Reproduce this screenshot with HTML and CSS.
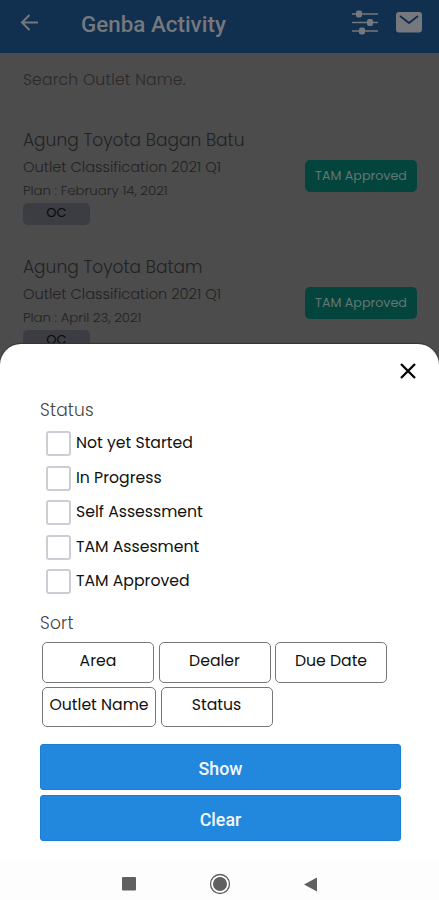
FILE: index.html
```html
<!DOCTYPE html>
<html lang="en">
<head>
<meta charset="utf-8">
<meta name="viewport" content="width=device-width, initial-scale=1">
<title>Genba Activity</title>
<link rel="stylesheet" href="styles.css">
</head>
<body>
<div class="screen">
  <header class="appbar">
    <svg class="back" width="20" height="20" viewBox="0 0 20 20"><path d="M18 9.500H2M9.500 2L2 9.500l7.500 7.500"/></svg>
    <h1>Genba Activity</h1>
    <svg class="sliders" width="28" height="26" viewBox="0 0 28 26"><path d="M1 4h26M1 12.500h26M1 21h26"/><rect x="5" y=".5" width="6" height="7" rx="2"/><rect x="16" y="9" width="6" height="7" rx="2"/><rect x="8" y="17.500" width="6" height="7" rx="2"/></svg>
    <svg class="mail" width="26" height="21" viewBox="0 0 26 21"><rect width="26" height="20.500" rx="3"/><path d="M4 4l9 7 9-7"/></svg>
  </header>
  <div class="search">Search Outlet Name.</div>
  <main class="list">
    <article class="item">
      <div class="info">
        <h2>Agung Toyota Bagan Batu</h2>
        <p class="sub">Outlet Classification 2021 Q1</p>
        <p class="plan">Plan : February 14, 2021</p>
        <span class="chip">OC</span>
      </div>
      <span class="badge">TAM Approved</span>
    </article>
    <article class="item">
      <div class="info">
        <h2>Agung Toyota Batam</h2>
        <p class="sub">Outlet Classification 2021 Q1</p>
        <p class="plan">Plan : April 23, 2021</p>
        <span class="chip">OC</span>
      </div>
      <span class="badge">TAM Approved</span>
    </article>
  </main>
  <section class="sheet">
    <svg class="close" width="16" height="16" viewBox="0 0 16 16"><path d="M1 1l14 14M15 1L1 15"/></svg>
    <h3>Status</h3>
    <div class="checks">
      <div class="check"><i></i><span>Not yet Started</span></div>
      <div class="check"><i></i><span>In Progress</span></div>
      <div class="check"><i></i><span>Self Assessment</span></div>
      <div class="check"><i></i><span>TAM Assesment</span></div>
      <div class="check"><i></i><span>TAM Approved</span></div>
    </div>
    <h3 class="sort">Sort</h3>
    <div class="options">
      <button>Area</button><button>Dealer</button><button>Due Date</button>
      <button class="wide">Outlet Name</button><button>Status</button>
    </div>
    <div class="actions">
      <button>Show</button>
      <button>Clear</button>
    </div>
  </section>
  <nav class="navbar">
    <svg width="14" height="14" viewBox="0 0 14 14"><rect width="14" height="13.500" rx="1"/></svg>
    <svg width="22" height="22" viewBox="0 0 22 22"><circle class="ring" cx="11" cy="11" r="9.500"/><circle cx="11" cy="11" r="7"/></svg>
    <svg width="14" height="15" viewBox="0 0 14 15"><path d="M0 7.500L13 .5v14z"/></svg>
  </nav>
</div>
</body>
</html>
```

FILE: styles.css
```css
* { box-sizing: border-box; }
body {
  margin: 0;
  font-family: Poppins, Inter, sans-serif;
  background: #4c4c4c;
}
h1, h2, h3, p { margin: 0; font-weight: 400; white-space: nowrap; }
button { font: inherit; padding: 0; white-space: nowrap; }
.screen { width: 439px; height: 900px; display: flex; flex-direction: column; overflow: hidden; }

.appbar {
  height: 53px; flex: none; display: flex; align-items: center;
  padding: 0 17px 8px 20px; background: #112f4e; color: #75797e;
}
.appbar h1 { margin: 2px 0 0 41px; font: 500 22.400px/28px Roboto, sans-serif; flex: 1; }
.back { fill: none; stroke: #75797e; stroke-width: 2; }
.sliders { margin-right: 17px; fill: #75797e; stroke: #75797e; stroke-width: 1.6; }
.sliders rect { stroke: none; }
.mail rect { fill: #75797e; }
.mail path { fill: none; stroke: #112f4e; stroke-width: 2; }

.search { height: 74px; flex: none; padding: 15px 23px; font-size: 15.500px; line-height: 23px; color: #2a2a2a; font-weight: 300; letter-spacing: .25px; }
.list { height: 217px; flex: none; overflow: hidden; color: #222; }
.item { height: 127px; display: flex; justify-content: space-between; padding: 0 22px 0 23px; }
.item h2 { font-size: 17px; line-height: 26px; font-weight: 300; letter-spacing: .03px; }
.sub { font-size: 14.600px; line-height: 22px; margin-top: 3px; font-weight: 300; }
.plan { font-size: 13.300px; line-height: 18px; margin-top: 4px; font-weight: 300; }
.chip {
  display: block; width: 67px; height: 22px; margin-top: 3px; border-radius: 5px;
  background: #3b3d43; color: #08090b; font-size: 13px; line-height: 20px; text-align: center;
}
.badge {
  width: 112px; height: 32px; margin-top: 33px; border-radius: 5px;
  background: #03443c; color: #647773; font-size: 12.700px; line-height: 31px; text-align: center; white-space: nowrap;
}

.sheet {
  height: 515px; flex: none; background: #fff; border-radius: 21px 21px 0 0;
  box-shadow: 0 -1px 1px #333; padding: 19px 38px 0 40px; display: flex; flex-direction: column;
}
.close { align-self: flex-end; margin-right: -15px; flex: none; fill: none; stroke: #080808; stroke-width: 2.4; }
.sheet h3 { font-size: 17px; line-height: 24px; margin-top: 19px; color: #444; font-weight: 300; letter-spacing: .2px; }
.checks { margin: 9px 0 0 6px; display: flex; flex-direction: column; gap: 9.600px; }
.check { height: 25px; display: flex; gap: 5px; font-size: 15.700px; line-height: 24px; color: #111; white-space: nowrap; }
.check i { width: 25px; height: 25px; border: 2px solid #cbced4; border-radius: 3px; }
.sheet .sort { margin-top: 17px; }
.options { margin: 7px 0 0 2px; display: flex; flex-wrap: wrap; gap: 4px 4.500px; }
.options button {
  width: 112px; height: 40.500px; border: 1px solid #777; border-radius: 5px;
  background: #fff; color: #111; font-size: 15.700px; line-height: 34px; padding-bottom: 4px;
}
.options .wide { width: 114px; }
.actions { margin-top: 17px; display: flex; flex-direction: column; gap: 5px; }
.actions button {
  width: 361px; height: 46px; border: 1px solid #1680d5; border-radius: 3px;
  background: #2188dd; color: #f2f8fd; font: 500 17.800px/46px Roboto, sans-serif; padding-top: 1px;
}
.navbar {
  flex: 1; background: #fdfdfd; display: flex; align-items: center; justify-content: center;
  gap: 73px; padding: 9px 0 0; fill: #606060;
}
.ring { fill: #fff; stroke: #606060; stroke-width: 1.300; }
```
